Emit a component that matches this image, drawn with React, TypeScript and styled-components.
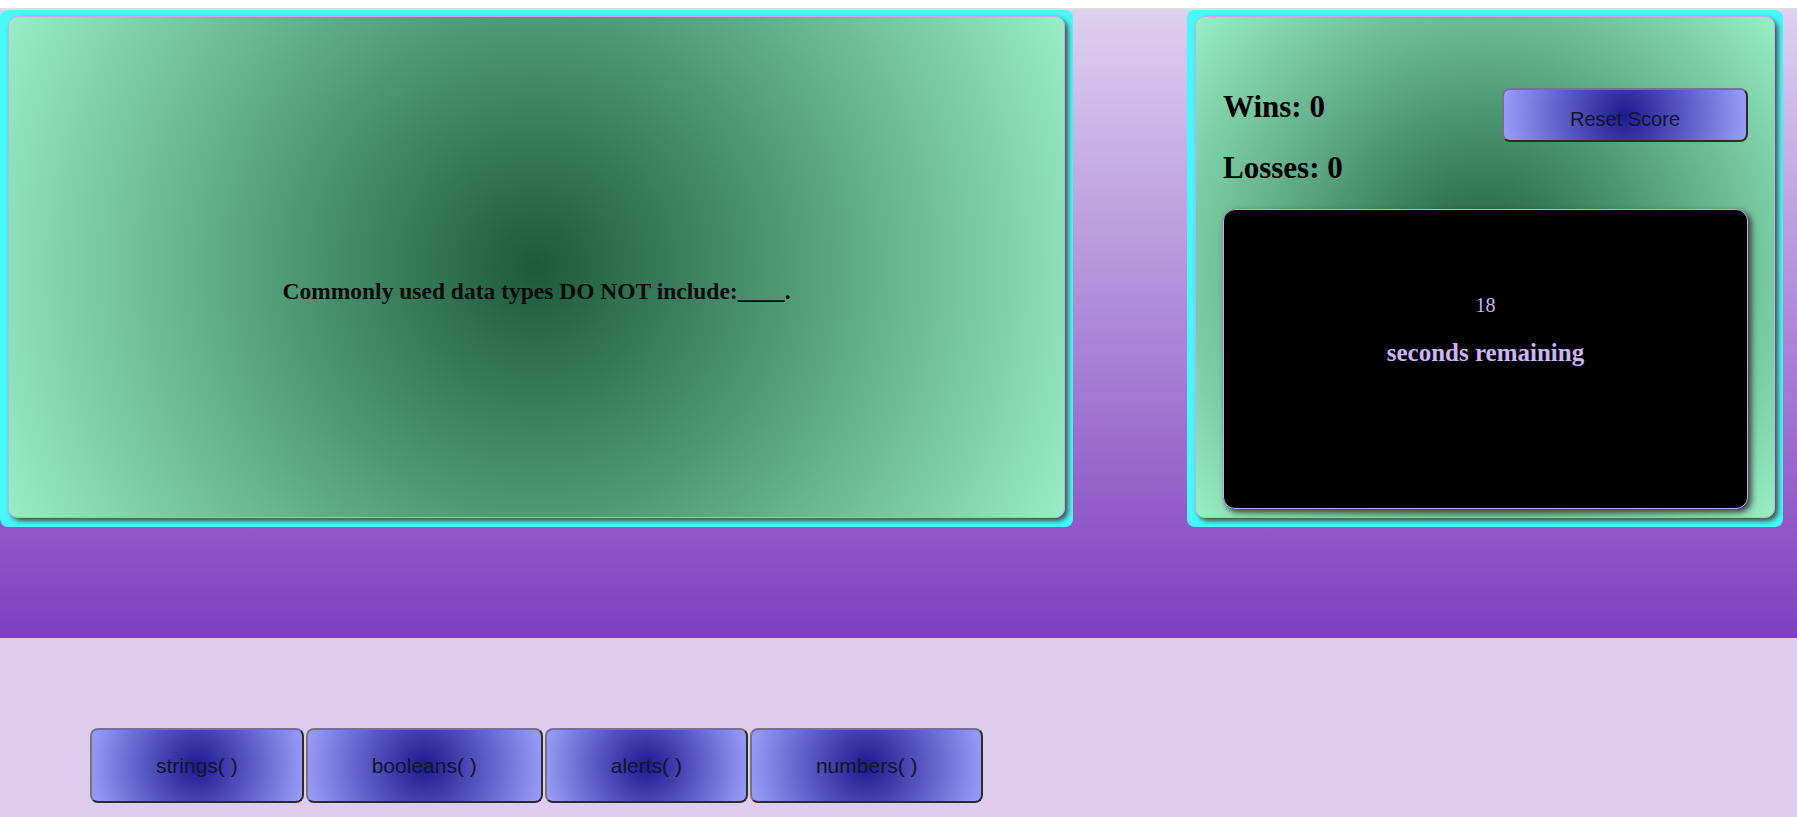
import styled, { createGlobalStyle } from 'styled-components'

const GlobalStyle = createGlobalStyle`
  html {
    background: #fff;
  }
  body {
    margin: 0;
    padding-top: 8px;
    font-family: "Liberation Serif", serif;
  }
`

const Page = styled('main')`
  min-height: calc(100vh - 8px);
  box-sizing: border-box;
  border-top: 2px solid #dcdcdc;
  background: #dccdee;
`

const Header = styled('header')`
  height: 628px;
  display: flex;
  justify-content: space-between;
  align-items: flex-start;
  padding-right: 14px;
  background: linear-gradient(#ddd0ef, #7f3fbf);
`

const Frame = styled('section')<{ $width: number }>`
  box-sizing: border-box;
  width: ${p => p.$width}px;
  height: 517px;
  padding: 6px 8px 9px 8px;
  background: #48f8f8;
  border-radius: 8px;
  display: flex;
`

const Card = styled('div')`
  flex: 1;
  box-sizing: border-box;
  border: 1px solid #c9aaf0;
  border-radius: 10px;
  box-shadow: 3px 3px 5px #4a4a4a;
  background: radial-gradient(circle, #1c5a3c 0%, #98eec4 100%);
`

const QuestionCard = styled(Card)`
  display: flex;
  align-items: center;
  justify-content: center;
  padding-top: 48px;
`

const Question = styled('h2')`
  margin: 0;
  font-size: 23.5px;
  font-weight: bold;
  color: #0c0c0c;
`

const ScoreCard = styled(Card)`
  display: flex;
  flex-direction: column;
  padding: 0 26px 8px 27px;
`

const ScoreRow = styled('div')`
  height: 192px;
  display: flex;
  justify-content: space-between;
  align-items: flex-start;
`

const Tally = styled('div')`
  margin-top: 72px;
  display: flex;
  flex-direction: column;
  gap: 25px;
`

const Stat = styled('h3')`
  margin: 0;
  font-size: 31px;
  line-height: 36px;
  font-weight: bold;
  color: #000;
`

const GradientButton = styled('button')`
  box-sizing: border-box;
  border: 2px solid;
  border-color: #767676 #2b2b2b #2b2b2b #767676;
  border-radius: 8px;
  font-family: "Liberation Sans", Arial, sans-serif;
  font-size: 20px;
  color: #14142a;
  background: radial-gradient(circle, #1e1a92 0%, #9a9ef7 100%);
  cursor: pointer;
`

const ResetButton = styled(GradientButton)`
  margin-top: 71px;
  width: 246px;
  height: 54px;
  padding: 8px 0 0;
`

const Timer = styled('div')`
  height: 300px;
  box-sizing: border-box;
  background: #000;
  border: 1px solid #c9a9f0;
  border-radius: 12px;
  box-shadow: 3px 3px 6px #333;
  display: flex;
  flex-direction: column;
  align-items: center;
  padding-top: 83px;
  color: #cdb3f8;
`

const Count = styled('span')`
  font-size: 20px;
  line-height: 24px;
`

const Remaining = styled('span')`
  margin-top: 21px;
  font-size: 25px;
  line-height: 30px;
  font-weight: bold;
`

const Answers = styled('div')`
  display: flex;
  gap: 2px;
  padding: 90px 0 0 90px;
`

const AnswerButton = styled(GradientButton)`
  height: 75px;
  padding: 0 64px;
  font-size: 21px;
`

const choices = ['strings( )', 'booleans( )', 'alerts( )', 'numbers( )']

function App() {
  return (
    <>
      <GlobalStyle />
      <Page>
        <Header>
          <Frame $width={1073}>
            <QuestionCard>
              <Question>Commonly used data types DO NOT include:____.</Question>
            </QuestionCard>
          </Frame>
          <Frame $width={596}>
            <ScoreCard>
              <ScoreRow>
                <Tally>
                  <Stat>Wins: 0</Stat>
                  <Stat>Losses: 0</Stat>
                </Tally>
                <ResetButton>Reset Score</ResetButton>
              </ScoreRow>
              <Timer>
                <Count>18</Count>
                <Remaining>seconds remaining</Remaining>
              </Timer>
            </ScoreCard>
          </Frame>
        </Header>
        <Answers>
          {choices.map(c => (
            <AnswerButton key={c}>{c}</AnswerButton>
          ))}
        </Answers>
      </Page>
    </>
  )
}

export default App
